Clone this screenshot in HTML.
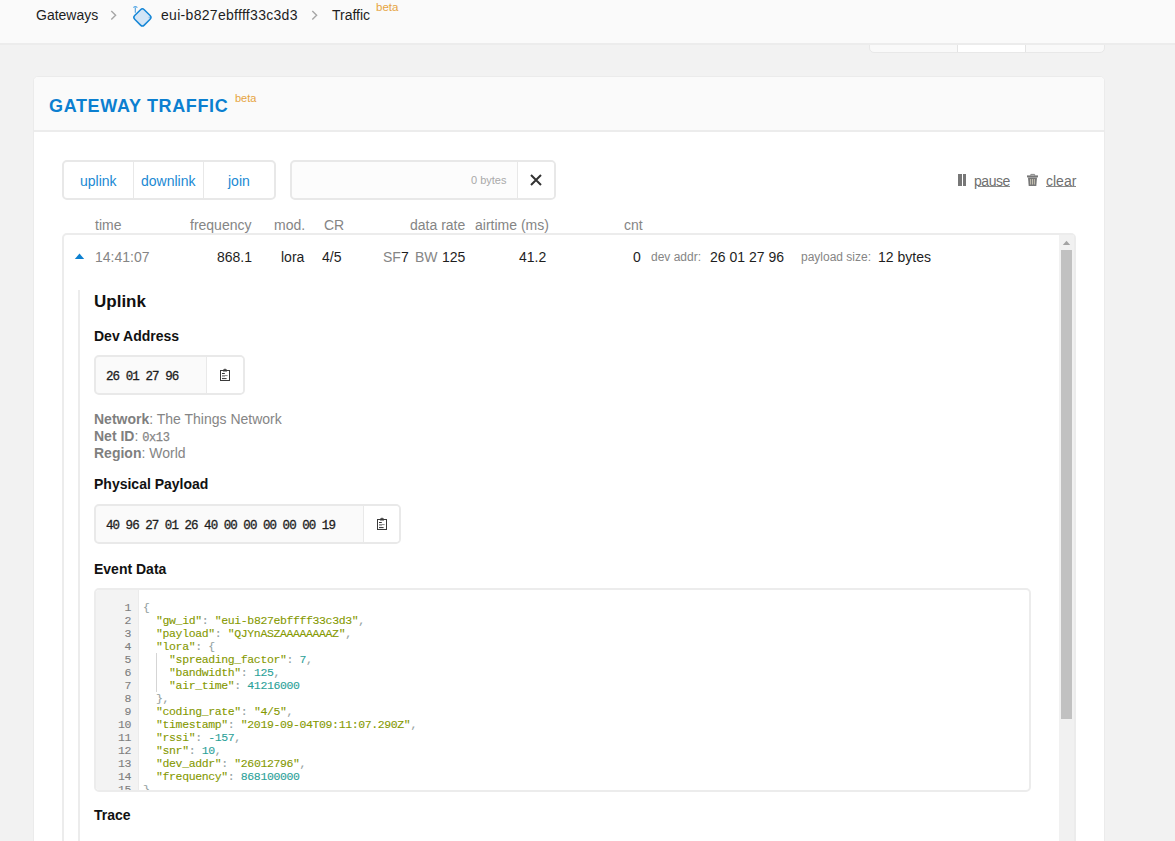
<!DOCTYPE html>
<html><head><meta charset="utf-8">
<style>
*{box-sizing:border-box;margin:0;padding:0}
html,body{width:1175px;height:841px;overflow:hidden;background:#f2f2f2;font-family:"Liberation Sans",sans-serif;color:#222;position:relative}
.a{position:absolute;white-space:nowrap}
.box{position:absolute}
.t14{font-size:14px;line-height:14px}
.t11{font-size:11px;line-height:11px}
.t12{font-size:12px;line-height:12px}
.g{color:#858585}
.k{color:#1e1e1e}
.beta{color:#e6a43f}
.mono{font-family:"Liberation Mono",monospace}
.hd{font-weight:bold;color:#111}
.blue{color:#2089d3}
.code div{position:absolute;left:0;height:13px;font-size:11.5px;line-height:13px;letter-spacing:-0.38px;white-space:pre;-webkit-text-stroke:0.1px currentColor}
.code span{-webkit-text-stroke:0.1px currentColor}
.ln{color:#7d7d7d;text-align:right;width:35px}
.p{color:#93a1a1}.s{color:#859900}.n{color:#2aa198}
</style></head>
<body>
<!-- header -->
<div class="box" style="left:0;top:0;width:1175px;height:45px;background:#fafafa;border-bottom:2px solid #ececec;z-index:3"></div>
<div style="position:absolute;left:0;top:0;z-index:4">
  <span class="a t14 k" style="left:36px;top:8px">Gateways</span>
  <svg class="a" style="left:109px;top:8px" width="8" height="14" viewBox="0 0 8 14"><path d="M2.3 3.1 L6.6 7.3 L2.3 11.5" fill="none" stroke="#a6a6a6" stroke-width="1.4"/></svg>
  <svg class="a" style="left:128px;top:2px" width="30" height="30" viewBox="0 0 30 30">
    <rect x="7.65" y="8.65" width="13.5" height="13.5" rx="2.6" transform="rotate(45 14.4 15.4)" fill="#d3e5f6" stroke="#1586d6" stroke-width="1.5"/>
    <path d="M7.3 10.8 V5.6" stroke="#4a9fe0" stroke-width="1.1"/>
    <path d="M5.4 5.6 Q7.3 3.6 9.4 5.6" fill="none" stroke="#5aaae6" stroke-width="1.1"/>
    <circle cx="21.3" cy="15.4" r="0.8" fill="#8cc0ec"/>
  </svg>
  <span class="a t14 k" style="left:161px;top:8px;letter-spacing:0.3px">eui-b827ebffff33c3d3</span>
  <svg class="a" style="left:310px;top:8px" width="8" height="14" viewBox="0 0 8 14"><path d="M2.3 3.1 L6.6 7.3 L2.3 11.5" fill="none" stroke="#a6a6a6" stroke-width="1.4"/></svg>
  <span class="a t14 k" style="left:332px;top:8px">Traffic</span>
  <span class="a beta" style="left:376px;top:1px;font-size:11.5px;line-height:12px">beta</span>
</div>
<!-- tabs remnant -->
<div class="box" style="left:869px;top:36px;width:236px;height:17px;border:1px solid #e8e8e8;border-radius:0 0 5px 5px;background:#f9f9f9;z-index:1"></div>
<div class="box" style="left:957px;top:36px;width:69px;height:16px;background:#fff;border-left:1px solid #e4e4e4;border-right:1px solid #e4e4e4;z-index:2"></div>

<!-- card -->
<div class="box" style="left:33px;top:76px;width:1072px;height:900px;border:1px solid #ebebeb;border-radius:5px;background:#fff"></div>
<div class="box" style="left:34px;top:77px;width:1070px;height:55px;background:#fafafa;border-bottom:2px solid #ececec;border-radius:4px 4px 0 0"></div>
<span class="a" style="left:49px;top:97px;font-size:18px;line-height:18px;font-weight:bold;color:#0b7fd0;letter-spacing:0.65px">GATEWAY TRAFFIC</span>
<span class="a t11 beta" style="left:235px;top:93px">beta</span>

<!-- filter buttons -->
<div class="box" style="left:62px;top:160px;width:214px;height:40px;border:2px solid #e8e8e8;border-radius:5px;background:#fff"></div>
<div class="box" style="left:133px;top:162px;width:1px;height:36px;background:#e8e8e8"></div>
<div class="box" style="left:203px;top:162px;width:1px;height:36px;background:#e8e8e8"></div>
<span class="a t14 blue" style="left:80px;top:174px">uplink</span>
<span class="a t14 blue" style="left:141px;top:174px">downlink</span>
<span class="a t14 blue" style="left:228px;top:174px">join</span>

<!-- search -->
<div class="box" style="left:290px;top:160px;width:266px;height:40px;border:2px solid #e8e8e8;border-radius:5px;background:#fcfcfc"></div>
<div class="box" style="left:517px;top:162px;width:37px;height:36px;background:#fff;border-left:1px solid #e8e8e8;border-radius:0 3px 3px 0"></div>
<span class="a t11" style="left:471px;top:175px;color:#a9a9a9">0 bytes</span>
<svg class="a" style="left:528px;top:172px" width="16" height="16" viewBox="0 0 16 16"><path d="M3 3 L13 13 M13 3 L3 13" stroke="#333" stroke-width="2"/></svg>

<!-- pause / clear -->
<div class="box" style="left:958px;top:174px;width:3.7px;height:12px;background:#777"></div>
<div class="box" style="left:963px;top:174px;width:3.4px;height:12px;background:#777"></div>
<span class="a t14" style="left:974px;top:174px;color:#6f6f6f;letter-spacing:-0.45px">pause</span>
<div class="box" style="left:978px;top:186px;width:32px;height:1px;background:#8a8a8a"></div>
<svg class="a" style="left:1026px;top:173px" width="13" height="14" viewBox="0 0 13 14">
  <path d="M4.8 2.6 V1.4 H8.6 V2.6" fill="none" stroke="#888" stroke-width="1"/>
  <rect x="1" y="2.4" width="11" height="2" fill="#777"/>
  <path d="M2 4.4 H11 L10.3 12.9 H2.7 Z" fill="#777"/>
  <path d="M4.6 6 V11.5 M6.5 6 V11.5 M8.4 6 V11.5" stroke="#d8d2bf" stroke-width="0.8"/>
</svg>
<span class="a t14" style="left:1046px;top:174px;color:#6f6f6f">clear</span>
<div class="box" style="left:1046px;top:186px;width:30px;height:1px;background:#8a8a8a"></div>

<!-- table header -->
<span class="a t14 g" style="left:95px;top:218px">time</span>
<span class="a t14 g" style="left:190px;top:218px">frequency</span>
<span class="a t14 g" style="left:274px;top:218px">mod.</span>
<span class="a t14 g" style="left:324px;top:218px">CR</span>
<span class="a t14 g" style="left:410px;top:218px">data rate</span>
<span class="a t14 g" style="left:475px;top:218px">airtime (ms)</span>
<span class="a t14 g" style="left:624px;top:218px">cnt</span>

<!-- table box -->
<div class="box" style="left:62px;top:233px;width:1014px;height:700px;border:2px solid #ececec;border-radius:5px;background:#fff"></div>
<div class="box" style="left:1059px;top:235px;width:15px;height:620px;background:#f1f1f1"></div>
<svg class="a" style="left:1059px;top:235px" width="15" height="14" viewBox="0 0 15 14"><path d="M3.8 10 L7.5 5.8 L11.2 10 Z" fill="#a3a3a3"/></svg>
<div class="box" style="left:1061px;top:250px;width:11px;height:469px;background:#c1c1c1"></div>

<!-- row -->
<svg class="a" style="left:74px;top:252px" width="11" height="8" viewBox="0 0 11 8"><path d="M0.8 7 L5.5 1.6 L10.2 7 Z" fill="#0d80d0"/></svg>
<span class="a t14 g" style="left:95px;top:250px">14:41:07</span>
<span class="a t14 k" style="left:217px;top:250px">868.1</span>
<span class="a t14 k" style="left:281px;top:250px">lora</span>
<span class="a t14 k" style="left:322px;top:250px">4/5</span>
<span class="a t14 g" style="left:383px;top:250px">SF</span>
<span class="a t14 k" style="left:401px;top:250px">7</span>
<span class="a t14 g" style="left:415px;top:250px">BW</span>
<span class="a t14 k" style="left:442px;top:250px">125</span>
<span class="a t14 k" style="left:519px;top:250px">41.2</span>
<span class="a t14 k" style="left:633px;top:250px">0</span>
<span class="a t12 g" style="left:651px;top:251px">dev addr:</span>
<span class="a t14 k" style="left:710px;top:250px">26 01 27 96</span>
<span class="a t12 g" style="left:801px;top:251px">payload size:</span>
<span class="a t14 k" style="left:878px;top:250px">12 bytes</span>

<!-- detail -->
<div class="box" style="left:78px;top:290px;width:2px;height:600px;background:#ececec"></div>
<span class="a hd" style="left:94px;top:293px;font-size:17px;line-height:17px">Uplink</span>
<span class="a t14 hd" style="left:94px;top:329px">Dev Address</span>

<div class="box" style="left:94px;top:355px;width:151px;height:40px;border:2px solid #e9e9e9;border-radius:5px;background:#fafafa"></div>
<div class="box" style="left:206px;top:357px;width:37px;height:36px;background:#fff;border-left:1px solid #e9e9e9;border-radius:0 3px 3px 0"></div>
<span class="a mono k" style="left:106px;top:371px;font-size:12.5px;line-height:12px;letter-spacing:-0.93px;-webkit-text-stroke:0.3px #1e1e1e">26 01 27 96</span>
<svg class="a clip" style="left:219px;top:368px" width="12" height="14" viewBox="0 0 12 14">
  <rect x="1.5" y="2.5" width="9" height="10" fill="none" stroke="#3a3a3a" stroke-width="1"/>
  <path d="M4 2.5 V1.5 H5.3 V0.8 H6.7 V1.5 H8 V3.5 H4 Z" fill="#3a3a3a"/>
  <path d="M3 5.5 H5.8" stroke="#333" stroke-width="1"/>
  <path d="M3 7.6 H8.6" stroke="#888" stroke-width="1"/>
  <path d="M3 8.6 H6" stroke="#999" stroke-width="0.8"/>
  <path d="M3 10.6 H7.6" stroke="#333" stroke-width="1"/>
</svg>

<div class="a t14 g" style="left:94px;top:412px"><b style="color:#7f7f7f">Network</b>: The Things Network</div>
<div class="a t14 g" style="left:94px;top:429px"><b style="color:#7f7f7f">Net ID</b>: <span class="mono" style="font-size:12px;letter-spacing:-0.4px;-webkit-text-stroke:0.25px #858585">0x13</span></div>
<div class="a t14 g" style="left:94px;top:446px"><b style="color:#7f7f7f">Region</b>: World</div>

<span class="a t14 hd" style="left:94px;top:477px">Physical Payload</span>
<div class="box" style="left:94px;top:504px;width:307px;height:40px;border:2px solid #e9e9e9;border-radius:5px;background:#fafafa"></div>
<div class="box" style="left:363px;top:506px;width:36px;height:36px;background:#fff;border-left:1px solid #e9e9e9;border-radius:0 3px 3px 0"></div>
<span class="a mono k" style="left:106px;top:520px;font-size:12.5px;line-height:12px;letter-spacing:-0.96px;-webkit-text-stroke:0.3px #1e1e1e">40 96 27 01 26 40 00 00 00 00 00 19</span>
<svg class="a clip" style="left:376px;top:517px" width="12" height="14" viewBox="0 0 12 14">
  <rect x="1.5" y="2.5" width="9" height="10" fill="none" stroke="#3a3a3a" stroke-width="1"/>
  <path d="M4 2.5 V1.5 H5.3 V0.8 H6.7 V1.5 H8 V3.5 H4 Z" fill="#3a3a3a"/>
  <path d="M3 5.5 H5.8" stroke="#333" stroke-width="1"/>
  <path d="M3 7.6 H8.6" stroke="#888" stroke-width="1"/>
  <path d="M3 8.6 H6" stroke="#999" stroke-width="0.8"/>
  <path d="M3 10.6 H7.6" stroke="#333" stroke-width="1"/>
</svg>

<span class="a t14 hd" style="left:94px;top:562px">Event Data</span>

<!-- editor -->
<div class="box" style="left:94px;top:588px;width:937px;height:204px;border:2px solid #ececec;border-radius:5px;background:#fff;overflow:hidden">
  <div class="box" style="left:0;top:0;width:43px;height:200px;background:#f3f3f3;border-right:1px solid #ebebeb"></div>
  <div class="box code mono" style="left:0;top:0;width:933px;height:200px">
    <div class="ln" style="top:11px">1</div><div style="left:47px;top:11px"><span class="p">{</span></div>
    <div class="ln" style="top:24px">2</div><div style="left:47px;top:24px"><span class="s">  "gw_id"</span><span class="p">: </span><span class="s">"eui-b827ebffff33c3d3"</span><span class="p">,</span></div>
    <div class="ln" style="top:37px">3</div><div style="left:47px;top:37px"><span class="s">  "payload"</span><span class="p">: </span><span class="s">"QJYnASZAAAAAAAAZ"</span><span class="p">,</span></div>
    <div class="ln" style="top:50px">4</div><div style="left:47px;top:50px"><span class="s">  "lora"</span><span class="p">: {</span></div>
    <div class="ln" style="top:63px">5</div><div style="left:47px;top:63px"><span class="s">    "spreading_factor"</span><span class="p">: </span><span class="n">7</span><span class="p">,</span></div>
    <div class="ln" style="top:76px">6</div><div style="left:47px;top:76px"><span class="s">    "bandwidth"</span><span class="p">: </span><span class="n">125</span><span class="p">,</span></div>
    <div class="ln" style="top:89px">7</div><div style="left:47px;top:89px"><span class="s">    "air_time"</span><span class="p">: </span><span class="n">41216000</span></div>
    <div class="ln" style="top:102px">8</div><div style="left:47px;top:102px"><span class="p">  },</span></div>
    <div class="ln" style="top:115px">9</div><div style="left:47px;top:115px"><span class="s">  "coding_rate"</span><span class="p">: </span><span class="s">"4/5"</span><span class="p">,</span></div>
    <div class="ln" style="top:128px">10</div><div style="left:47px;top:128px"><span class="s">  "timestamp"</span><span class="p">: </span><span class="s">"2019-09-04T09:11:07.290Z"</span><span class="p">,</span></div>
    <div class="ln" style="top:141px">11</div><div style="left:47px;top:141px"><span class="s">  "rssi"</span><span class="p">: </span><span class="n">-157</span><span class="p">,</span></div>
    <div class="ln" style="top:154px">12</div><div style="left:47px;top:154px"><span class="s">  "snr"</span><span class="p">: </span><span class="n">10</span><span class="p">,</span></div>
    <div class="ln" style="top:167px">13</div><div style="left:47px;top:167px"><span class="s">  "dev_addr"</span><span class="p">: </span><span class="s">"26012796"</span><span class="p">,</span></div>
    <div class="ln" style="top:180px">14</div><div style="left:47px;top:180px"><span class="s">  "frequency"</span><span class="p">: </span><span class="n">868100000</span></div>
    <div class="ln" style="top:193px">15</div><div style="left:47px;top:193px"><span class="p">}</span></div>
    <div class="box" style="left:60px;top:63px;width:1px;height:39px;background:#d5d5d5"></div>
  </div>
</div>

<span class="a t14 hd" style="left:94px;top:808px">Trace</span>
</body></html>
